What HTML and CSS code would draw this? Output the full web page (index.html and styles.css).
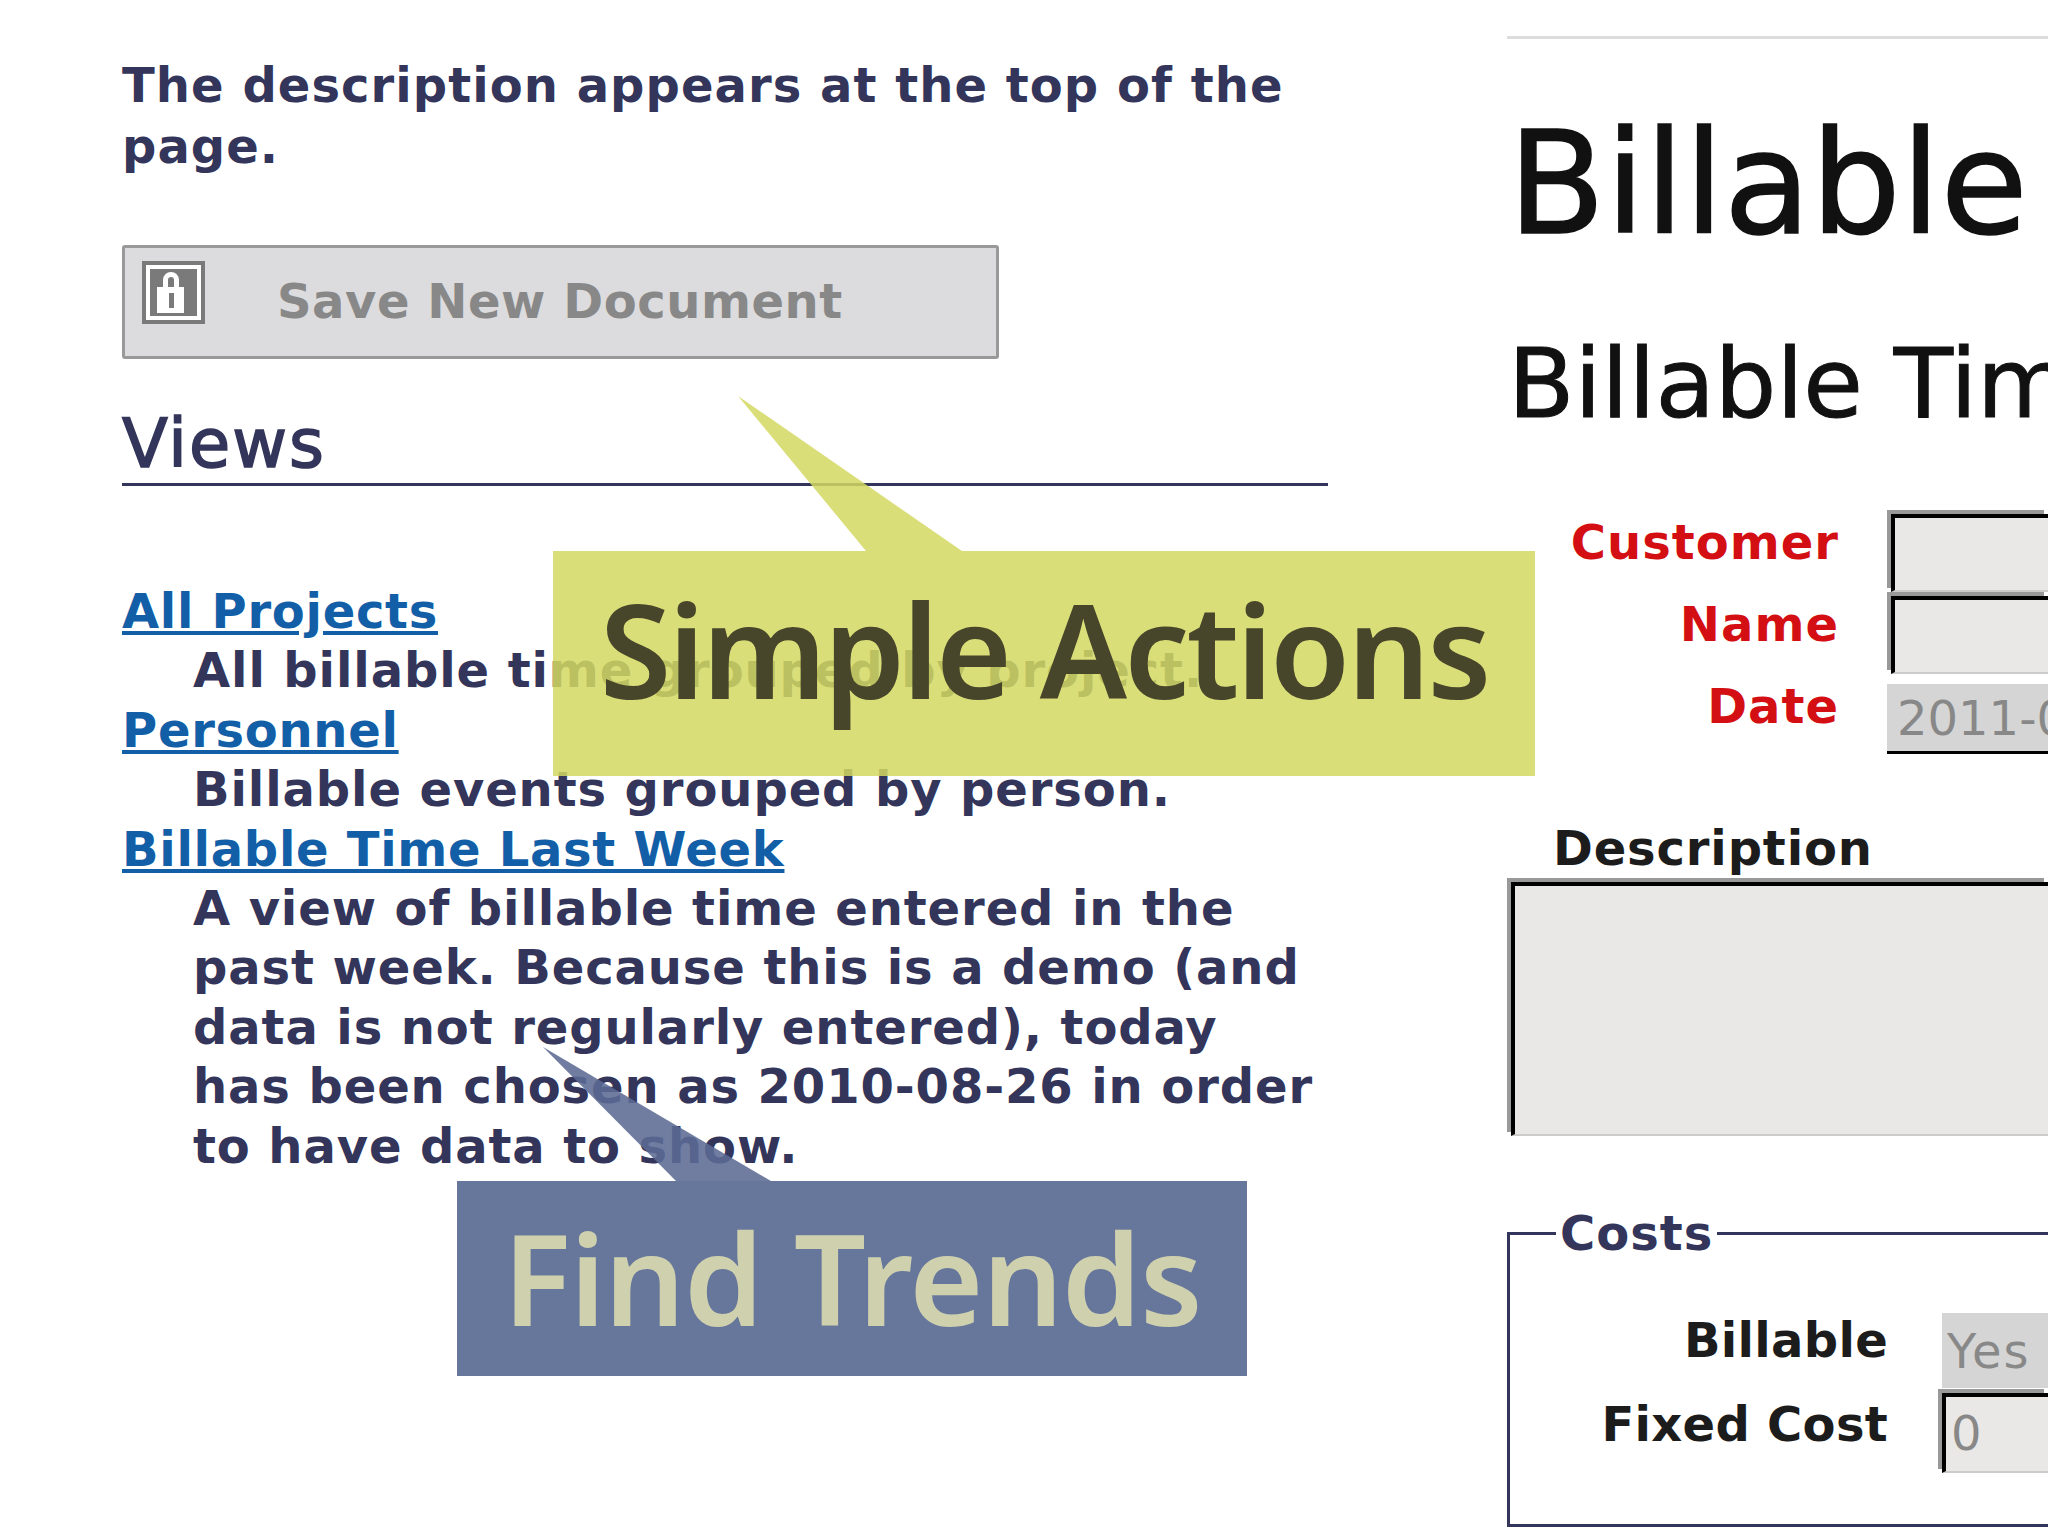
FILE: index.html
```html
<!DOCTYPE html>
<html lang="en">
<head>
<meta charset="utf-8">
<title>Billable Time</title>
<link rel="stylesheet" href="styles.css">
</head>
<body>
<div class="page">
  <aside class="side">
    <p class="intro">The description appears at the top of the page.</p>
    <button class="save" type="button" disabled>
      <svg class="lock" viewBox="0 0 63 63" aria-hidden="true">
        <rect width="63" height="63" fill="#7a7a7a"/>
        <rect x="4" y="4" width="55" height="55" fill="#fff"/>
        <rect x="8" y="8" width="47" height="47" fill="#7a7a7a"/>
        <path d="M21 26v-7a8 8 0 0 1 16 0v7h-5v-7a3 3 0 0 0-6 0v7z" fill="#fff"/>
        <path d="M15 26h27v26H15z" fill="#fff"/>
        <rect x="27" y="32" width="5" height="15" fill="#7a7a7a"/>
      </svg>
      <span class="save-label">Save New Document</span>
    </button>
    <h3 class="views-title">Views</h3>
    <dl class="views">
      <dt><a href="#">All Projects</a></dt>
      <dd>All billable time grouped by project.</dd>
      <dt><a href="#">Personnel</a></dt>
      <dd>Billable events grouped by person.</dd>
      <dt><a href="#">Billable Time Last Week</a></dt>
      <dd>A view of billable time entered in the past week. Because this is a demo (and data is not regularly entered), today has been chosen as 2010-08-26 in order to have data to show.</dd>
    </dl>
  </aside>
  <main class="main">
    <h1 class="title">Billable Time</h1>
    <h2 class="subtitle">Billable Time</h2>
    <div class="fields">
      <div class="row"><label class="req">Customer</label><div class="input"></div></div>
      <div class="row"><label class="req">Name</label><div class="input"></div></div>
      <div class="row"><label class="req">Date</label><div class="static">2011-03-14</div></div>
    </div>
    <div class="desc-label">Description</div>
    <div class="input textarea"></div>
    <fieldset class="costs">
      <legend>Costs</legend>
      <div class="row cost-row"><label>Billable</label><div class="static select">Yes</div></div>
      <div class="row cost-row"><label>Fixed Cost</label><div class="input value">0</div></div>
    </fieldset>
  </main>
</div>
<div class="callout actions">
  <svg class="tail" viewBox="0 0 224 155" aria-hidden="true"><polygon points="0,0 128,155 224,155"/></svg>
  <span>Simple Actions</span>
</div>
<div class="callout trends">
  <svg class="tail" viewBox="0 0 228 134" aria-hidden="true"><polygon points="0,0 133,134 228,134"/></svg>
  <span>Find Trends</span>
</div>
</body>
</html>
```
FILE: styles.css
```css
html, body {
  margin: 0;
  padding: 0;
  background: #fff;
}
body {
  width: 2048px;
  height: 1536px;
  overflow: hidden;
  position: relative;
  font-family: "DejaVu Sans", sans-serif;
}
.page {
  display: flex;
  width: 2048px;
  height: 1536px;
  padding-left: 122px;
  box-sizing: border-box;
  overflow: hidden;
}
.side {
  width: 1206px;
  flex: none;
  color: #33355a;
  font-weight: 700;
  font-size: 48px;
  letter-spacing: 0.9px;
}
.intro {
  margin: 55px 0 0;
  line-height: 61px;
  letter-spacing: 1.05px;
}
.save {
  display: flex;
  align-items: flex-start;
  width: 877px;
  height: 114px;
  margin: 68px 0 0;
  padding: 13px 0 0 17px;
  box-sizing: border-box;
  background: #dcdbdd;
  border: 3px solid #999;
  border-radius: 3px;
  font: inherit;
  letter-spacing: 0.55px;
  color: #888;
}
.lock {
  width: 63px;
  height: 63px;
  flex: none;
}
.save-label {
  margin: 10px 0 0 72px;
  line-height: 61px;
}
.views-title {
  margin: 46px 0 0;
  font-size: 67px;
  font-weight: 400;
  letter-spacing: 2px;
  -webkit-text-stroke: 1.6px #33355a;
  line-height: 78px;
  padding-bottom: 0;
  border-bottom: 3px solid #33355a;
}
.views {
  margin: 96px 0 0;
  line-height: 59.4px;
}
.views dt {
  letter-spacing: 0.7px;
}
.views dd {
  margin: 0 0 0 71px;
}
.views a {
  color: #125fa8;
}
.main {
  flex: 1;
  min-width: 0;
  margin-left: 179px;
  border-top: 3px solid #ddd;
  margin-top: 36px;
  color: #1c1c1c;
}
.title {
  margin: 60px 0 0 1px;
  font-size: 142px;
  font-weight: 400;
  -webkit-text-stroke: 1.5px #111;
  line-height: 170px;
  white-space: nowrap;
  color: #111;
}
.subtitle {
  margin: 57px 0 0 1px;
  font-size: 97px;
  font-weight: 400;
  -webkit-text-stroke: 1px #111;
  line-height: 116px;
  white-space: nowrap;
  color: #111;
}
.fields {
  margin-top: 72px;
}
.row {
  display: flex;
  height: 82px;
}
.row label {
  width: 332px;
  flex: none;
  text-align: right;
  font-size: 48px;
  font-weight: 700;
  letter-spacing: 1px;
  line-height: 56px;
}
.req {
  color: #d40f14;
}
.input {
  flex: 1;
  margin-left: 52px;
  box-sizing: border-box;
  height: 78px;
  background: #e9e8e6;
  border-style: solid;
  border-color: #000 #000 #ccc #000;
  border-width: 4px 0 2px 4px;
  box-shadow: -4px -4px 0 #999;
}
.static {
  flex: 1;
  margin: 6px 0 0 48px;
  box-sizing: border-box;
  height: 70px;
  background: #d5d5d5;
  border-bottom: 3px solid #000;
  color: #888;
  font-size: 48px;
  line-height: 68px;
  padding-left: 10px;
  white-space: nowrap;
  overflow: hidden;
}
.desc-label {
  margin: 58px 0 0 46px;
  padding-bottom: 4px;
  font-size: 48px;
  font-weight: 700;
  letter-spacing: 0.85px;
  line-height: 60px;
}
.textarea {
  flex: none;
  margin-left: 4px;
  height: 254px;
}
.costs {
  margin: 67px 0 0;
  padding: 50px 0 0;
  height: 324px;
  box-sizing: border-box;
  border: 3px solid #33355a;
  border-right: 0;
}
.costs legend {
  margin-left: 46px;
  padding: 0 4px;
  color: #33355a;
  font-size: 48px;
  font-weight: 700;
  letter-spacing: 1px;
  line-height: 60px;
}
.cost-row {
  height: 84px;
}
.row.cost-row label {
  width: 378px;
  line-height: 54px;
  letter-spacing: 0.3px;
}
.select {
  margin: 0 0 0 54px;
  height: 75px;
  border-bottom: 0;
  padding-left: 5px;
  line-height: 76px;
  letter-spacing: 2px;
}
.value {
  margin: -4px 0 0 54px;
  height: 80px;
  padding-left: 5px;
  color: #888;
  font-size: 48px;
  line-height: 72px;
}
.callout {
  position: absolute;
  display: flex;
  align-items: center;
  justify-content: center;
  box-sizing: border-box;
  font-family: "Noto Sans", sans-serif;
  font-weight: 600;
  white-space: nowrap;
}
.tail {
  position: absolute;
  display: block;
}
.actions {
  left: 553px;
  top: 551px;
  width: 982px;
  height: 225px;
  padding-bottom: 30px;
  background: rgba(211, 216, 97, 0.85);
  color: #47452a;
  font-size: 130px;
  letter-spacing: -3px;
}
.actions .tail {
  left: 185px;
  top: -155px;
  width: 224px;
  height: 155px;
  fill: rgba(211, 216, 97, 0.85);
}
.trends {
  left: 457px;
  top: 1181px;
  width: 790px;
  height: 195px;
  padding-bottom: 5px;
  background: #67769b;
  color: #cfd1ae;
  font-size: 127px;
  letter-spacing: -1.4px;
}
.trends .tail {
  left: 86px;
  top: -134px;
  width: 228px;
  height: 134px;
  fill: rgba(92, 107, 148, 0.88);
}
```
